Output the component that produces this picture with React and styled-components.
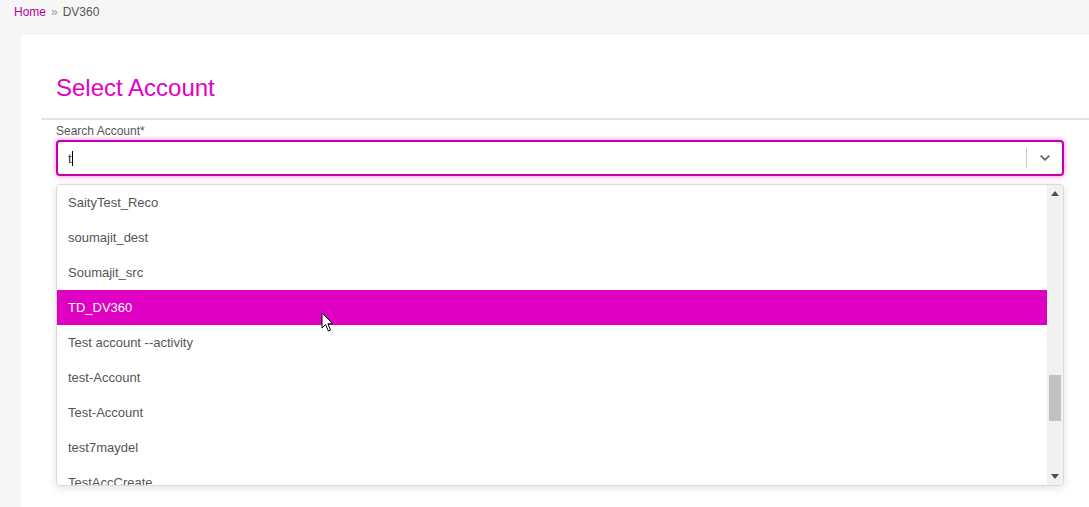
import React from "react";
import styled, { createGlobalStyle } from "styled-components";

const GlobalStyle = createGlobalStyle`
  html, body {
    margin: 0;
    padding: 0;
    background: #f6f6f6;
    font-family: "Liberation Sans", Arial, sans-serif;
  }
`;

const accounts = [
  "SaityTest_Reco",
  "soumajit_dest",
  "Soumajit_src",
  "TD_DV360",
  "Test account --activity",
  "test-Account",
  "Test-Account",
  "test7maydel",
  "TestAccCreate",
];

function App() {
  const selected = "TD_DV360";
  return (
    <>
      <GlobalStyle />
      <Page>
        <Breadcrumb>
          <Crumb href="#">Home</Crumb>
          <Sep>»</Sep>
          <Current>DV360</Current>
        </Breadcrumb>
        <Panel>
          <Title>Select Account</Title>
          <Divider />
          <Form>
            <Label>Search Account*</Label>
            <SelectBox>
              <Value>
                t<Caret />
              </Value>
              <IndicatorSep />
              <Indicator>
                <svg width="14" height="14" viewBox="0 0 20 20">
                  <path
                    d="M4.5 7.2 L10 12.6 L15.5 7.2"
                    fill="none"
                    stroke="#666"
                    strokeWidth="2.6"
                    strokeLinecap="round"
                    strokeLinejoin="round"
                  />
                </svg>
              </Indicator>
            </SelectBox>
            <Menu>
              <List>
                {accounts.map((a) => (
                  <Option key={a} $active={a === selected}>
                    {a}
                  </Option>
                ))}
              </List>
              <ScrollBar>
                <ArrowBtn>
                  <svg width="8" height="5" viewBox="0 0 8 5">
                    <path d="M0 5 L4 0 L8 5 Z" fill="#505050" />
                  </svg>
                </ArrowBtn>
                <Track>
                  <Thumb $top={173} $size={46} />
                </Track>
                <ArrowBtn>
                  <svg width="8" height="5" viewBox="0 0 8 5">
                    <path d="M0 0 L8 0 L4 5 Z" fill="#505050" />
                  </svg>
                </ArrowBtn>
              </ScrollBar>
            </Menu>
          </Form>
        </Panel>
        <Pointer>
          <svg width="14" height="21" viewBox="0 0 14 21">
            <path
              d="M1 1 L1 16 L4.6 12.6 L7.4 19 L9.6 18 L6.9 11.8 L11.8 11.8 Z"
              fill="#fff"
              stroke="#000"
              strokeWidth="1"
              strokeLinejoin="round"
            />
          </svg>
        </Pointer>
      </Page>
    </>
  );
}

const Page = styled.div`
  position: relative;
  width: 1089px;
  height: 507px;
  overflow: hidden;
  display: flex;
  flex-direction: column;
`;

const Breadcrumb = styled.div`
  display: flex;
  align-items: center;
  gap: 5px;
  height: 24px;
  padding: 0 14px;
  font-size: 12px;
  margin-bottom: 11px;
`;

const Crumb = styled.a`
  color: #b5009b;
  text-decoration: none;
`;

const Sep = styled.span`
  color: #999;
`;

const Current = styled.span`
  color: #555;
`;

const Panel = styled.div`
  flex: 1;
  margin-left: 21px;
  background: #fff;
  padding-top: 39px;
`;

const Title = styled.h1`
  margin: 0 0 0 35px;
  font-size: 24px;
  font-weight: normal;
  line-height: 28px;
  color: #e000c3;
  padding-bottom: 16px;
`;

const Divider = styled.div`
  margin-left: 20px;
  height: 2px;
  background: #e4e4e8;
`;

const Form = styled.div`
  padding: 4px 25px 0 35px;
`;

const Label = styled.div`
  font-size: 12px;
  line-height: 14px;
  color: #555;
  margin-bottom: 2px;
`;

const SelectBox = styled.div`
  display: flex;
  align-items: center;
  height: 36px;
  box-sizing: border-box;
  border: 2px solid #c300aa;
  border-radius: 4px;
  box-shadow: 0 0 5px rgba(224, 0, 195, 0.55);
  background: #fff;
`;

const Value = styled.div`
  flex: 1;
  padding-left: 10px;
  font-size: 13px;
  color: #333;
  display: flex;
  align-items: center;
`;

const Caret = styled.span`
  display: inline-block;
  width: 1px;
  height: 15px;
  background: #000;
`;

const IndicatorSep = styled.div`
  width: 1px;
  height: 20px;
  background: #ccc;
`;

const Indicator = styled.div`
  width: 35px;
  display: flex;
  justify-content: center;
  align-items: center;
`;

const Menu = styled.div`
  margin-top: 8px;
  height: 300px;
  display: flex;
  border: 1px solid #dadada;
  border-radius: 4px;
  box-shadow: 0 2px 8px rgba(0, 0, 0, 0.12);
  overflow: hidden;
  background: #fff;
`;

const List = styled.div`
  flex: 1;
  overflow: hidden;
`;

const Option = styled.div`
  height: 35px;
  display: flex;
  align-items: center;
  padding-left: 11px;
  font-size: 13px;
  color: ${(p) => (p.$active ? "#fff" : "#555")};
  background: ${(p) => (p.$active ? "#e000c3" : "#fff")};
`;

const ScrollBar = styled.div`
  width: 16px;
  background: #f1f1f1;
  display: flex;
  flex-direction: column;
`;

const ArrowBtn = styled.div`
  height: 17px;
  display: flex;
  align-items: center;
  justify-content: center;
`;

const Track = styled.div`
  flex: 1;
  padding: 0 2px;
`;

const Thumb = styled.div`
  margin-top: ${(p) => p.$top}px;
  height: ${(p) => p.$size}px;
  background: #c1c1c1;
`;

const Pointer = styled.div`
  position: absolute;
  left: 321px;
  top: 312px;
  line-height: 0;
`;

export default App;
